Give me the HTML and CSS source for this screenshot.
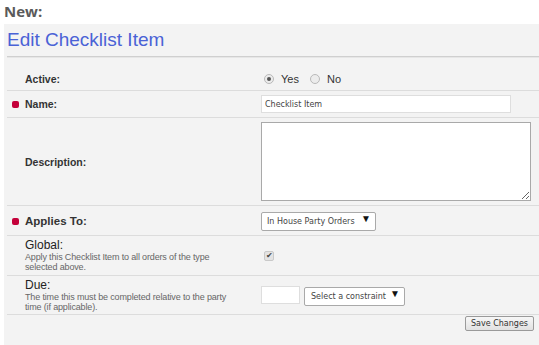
FILE: index.html
```html
<!DOCTYPE html>
<html lang="en">
<head>
  <meta charset="UTF-8" />
  <title>Edit Checklist Item</title>
<link rel="stylesheet" href="styles.css">
</head>
<body>
<div class="page-label">New:</div>

<div class="panel">
  <h2 class="panel-title">Edit Checklist Item</h2>

  <div class="form">
    <div class="row row-active">
      <div class="field-label"><b>Active:</b></div>
      <div class="field">
        <label class="choice"><input type="radio" name="active" checked> Yes</label>
        <label class="choice"><input type="radio" name="active"> No</label>
      </div>
    </div>

    <div class="row">
      <div class="field-label required"><b>Name:</b></div>
      <div class="field">
        <input class="text name-input" type="text" value="Checklist Item">
      </div>
    </div>

    <div class="row">
      <div class="field-label"><b>Description:</b></div>
      <div class="field">
        <textarea class="desc-input"></textarea>
      </div>
    </div>

    <div class="row">
      <div class="field-label required"><b class="big">Applies To:</b></div>
      <div class="field">
        <span class="select-wrap applies">
          <select><option>In House Party Orders</option></select>
          <span class="arrow">&#9660;</span>
        </span>
      </div>
    </div>

    <div class="row row-global">
      <div class="field-label">
        <div class="title">Global:</div>
        <div class="hint">Apply this Checklist Item to all orders of the type<br>selected above.</div>
      </div>
      <div class="field">
        <input class="check" type="checkbox" checked>
      </div>
    </div>

    <div class="row row-due">
      <div class="field-label">
        <div class="title">Due:</div>
        <div class="hint">The time this must be completed relative to the party<br>time (if applicable).</div>
      </div>
      <div class="field">
        <input class="text due-input" type="text">
        <span class="select-wrap constraint">
          <select><option>Select a constraint</option></select>
          <span class="arrow">&#9660;</span>
        </span>
      </div>
    </div>
  </div>

  <div class="actions">
    <button class="save">Save Changes</button>
  </div>
</div>
</body>
</html>
```

FILE: styles.css
```css
body {
  margin: 0;
  background: #fff;
  font-family: "Liberation Sans", Arial, sans-serif;
  color: #333;
}

.page-label {
  font-family: "Open Sans", sans-serif;
  font-weight: 700;
  font-size: 15px;
  line-height: 22px;
  color: #5a5a5a;
  height: 24px;
  padding-left: 4px;
  box-sizing: border-box;
}

.panel {
  box-sizing: border-box;
  min-height: calc(100vh - 24px);
  margin-left: 4px;
  padding: 5px 0 0 3px;
  background: #f3f3f3;
}

.panel-title {
  margin: 0;
  font-weight: normal;
  font-size: 19px;
  line-height: 22px;
  color: #4a62d6;
  padding-bottom: 5px;
  border-bottom: 1px solid #cfcfcf;
  box-shadow: 0 1px 0 #e6e6e6;
}

.form {
  margin-top: 11px;
}

.row {
  display: flex;
  align-items: center;
  padding: 4px 0;
  border-bottom: 1px solid #dcdcdc;
}

.row-active {
  padding: 5px 0;
}

.row-global,
.row-due {
  box-sizing: border-box;
  padding: 0;
}

.row-global {
  height: 40px;
}

.row-due {
  height: 39px;
}

.field-label {
  width: 236px;
  padding-left: 18px;
  font-size: 10.5px;
}

.field-label b {
  color: #333;
}

.field-label .big {
  font-size: 11.5px;
}

.required::before {
  content: "";
  display: inline-block;
  width: 7px;
  height: 7px;
  border-radius: 2px;
  background: #c4003a;
  margin-left: -13px;
  margin-right: 6px;
}

.title {
  font-size: 12px;
  line-height: 13px;
  color: #222;
}

.hint {
  font-size: 9px;
  line-height: 10px;
  color: #666;
  letter-spacing: -0.15px;
}

.field {
  display: flex;
  align-items: center;
  gap: 4px;
}

.choice {
  display: inline-flex;
  align-items: center;
  font-size: 11px;
  line-height: 12px;
  margin-right: 4px;
  color: #333;
}

.choice input {
  appearance: none;
  box-sizing: border-box;
  width: 10px;
  height: 10px;
  margin: 0 7px 0 3px;
  border: 1px solid #b9b9b9;
  border-radius: 50%;
  background: #ececec;
  position: relative;
}

.choice input:checked::after {
  content: "";
  position: absolute;
  left: 2px;
  top: 2px;
  width: 4px;
  height: 4px;
  border-radius: 50%;
  background: #555;
}

.text {
  box-sizing: border-box;
  height: 18px;
  margin: 0;
  padding: 0 3px;
  border: 1px solid #dedede;
  background: #fff;
  font-family: "DejaVu Sans", Verdana, sans-serif;
  font-size: 8px;
  color: #444;
}

.name-input {
  width: 250px;
}

.due-input {
  width: 39px;
}

.desc-input {
  box-sizing: border-box;
  width: 270px;
  height: 79px;
  margin: 0;
  border: 1px solid #a9a9a9;
  background: #fff;
  resize: both;
}

.select-wrap {
  position: relative;
  display: inline-block;
}

.select-wrap select {
  appearance: none;
  box-sizing: border-box;
  height: 19px;
  margin: 0;
  border: 1px solid #a9a9a9;
  border-radius: 2px;
  background: #fff;
  font-family: "DejaVu Sans", Verdana, sans-serif;
  font-size: 8px;
  color: #444;
}

.applies select {
  width: 115px;
  padding-left: 5px;
}

.constraint select {
  width: 101px;
  padding-left: 6px;
}

.arrow {
  position: absolute;
  right: 5px;
  top: 3px;
  font-size: 10px;
  line-height: 12px;
  color: #111;
  pointer-events: none;
}

.check {
  appearance: none;
  box-sizing: border-box;
  width: 10px;
  height: 10px;
  margin: 0 0 0 3px;
  border: 1px solid #c9c9c9;
  border-radius: 2px;
  background: #e3e3e3;
  position: relative;
}

.check:checked::after {
  content: "\2714";
  position: absolute;
  left: 1px;
  top: -1px;
  font-size: 8px;
  line-height: 9px;
  color: #444;
}

.actions {
  display: flex;
  justify-content: flex-end;
  padding: 1px 5px 0 0;
}

.save {
  height: 15px;
  padding: 0 5px;
  border: 1px solid #9a9a9a;
  border-radius: 2px;
  background: linear-gradient(#f7f7f7, #e1e1e1);
  font-family: "DejaVu Sans", Verdana, sans-serif;
  font-size: 8px;
  color: #333;
}
```
